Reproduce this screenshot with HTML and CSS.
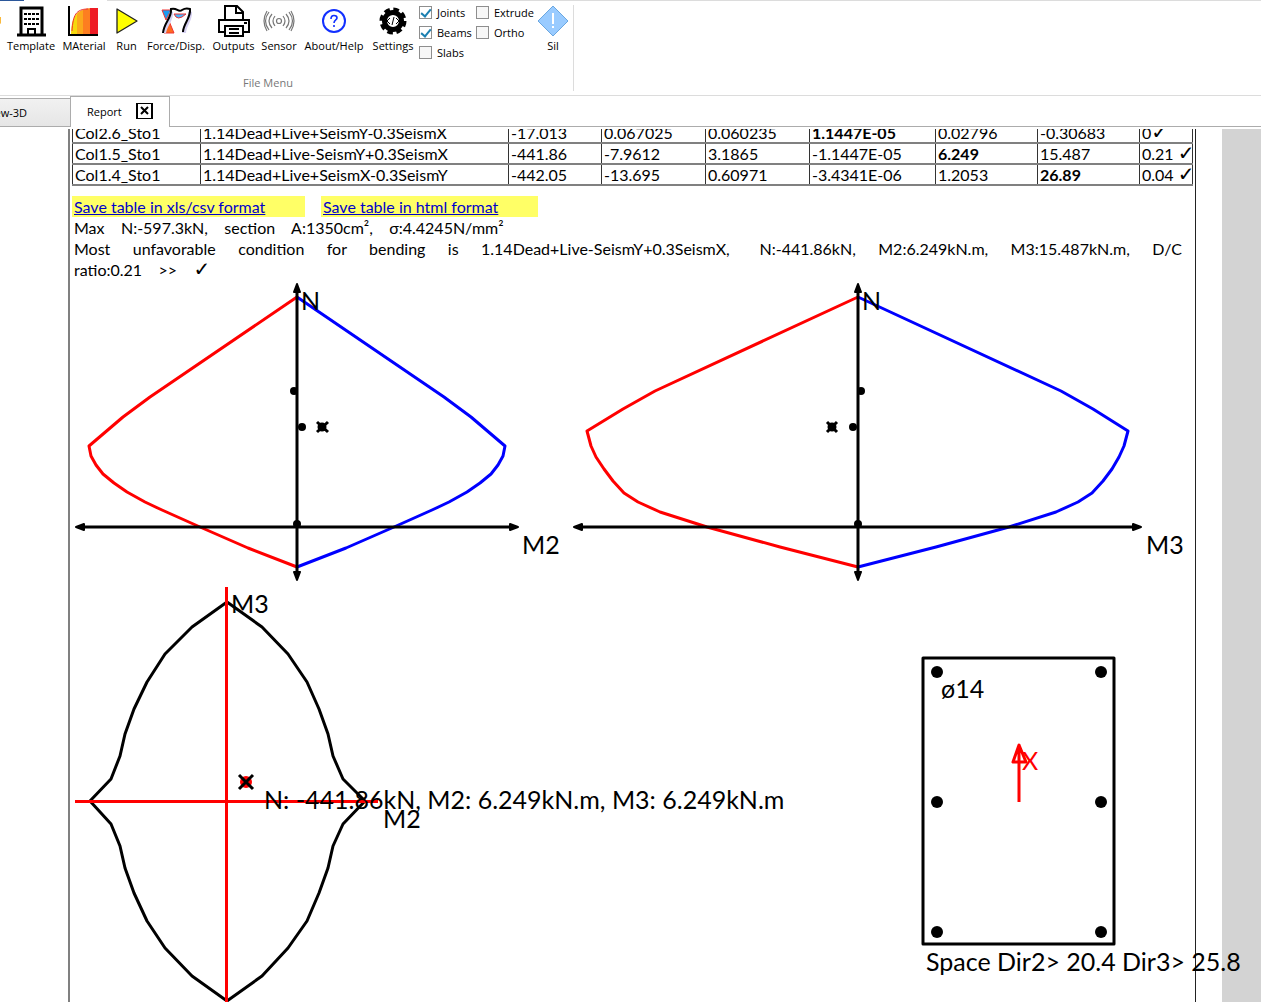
FILE: index.html
```html
<!DOCTYPE html>
<html lang="en">
<head>
    <meta charset="UTF-8">
    <meta name="viewport" content="width=device-width, initial-scale=1.0">
    <title>Report</title>
    <link rel="stylesheet" href="styles.css">
</head>
<body>

    <!-- Ribbon -->
    <header class="ribbon">
        <div class="ribbon-edge"><span class="edge-file"></span><span class="edge-active"></span><span class="edge-rest"></span></div>
        <section class="group">
            <div class="tools">
                <button class="tool" type="button" aria-label="Open">
                    <svg class="icon" width="32" height="32" viewBox="0 0 32 32"><path d="M0 12h32v6l-3 4H0z" fill="#f9b93c"/></svg>
                </button>
                <button class="tool" type="button">
                    <svg class="icon" width="32" height="32" viewBox="0 0 32 32">
                        <path d="M6 30V3h21v27M2 30h29" fill="none" stroke="#000" stroke-width="3"/>
                        <path d="M9 9h15M9 14h15M9 19h15" stroke="#000" stroke-width="2" stroke-dasharray="3 1"/>
                        <path d="M13 30v-6h7v6" fill="none" stroke="#000" stroke-width="2"/>
                    </svg>
                    Template
                </button>
                <button class="tool" type="button">
                    <svg class="icon" width="32" height="32" viewBox="0 0 32 32">
                        <path d="M3 29c0-12 3-19 8-22v22z" fill="#f6d80e"/>
                        <path d="M9 29V9q3-4 6-4v24z" fill="#fba81c"/>
                        <path d="M15 29V5q4-2 8-2v26z" fill="#fd7e20"/>
                        <path d="M22 29V3h8v26z" fill="#ee1c25"/>
                        <path d="M4 26C5 10 8 4 20 4" fill="none" stroke="#e33" stroke-width="1"/>
                        <path d="M1 1v29h29" fill="none" stroke="#000" stroke-width="2"/>
                    </svg>
                    MAterial
                </button>
                <button class="tool" type="button">
                    <svg class="icon" width="32" height="32" viewBox="0 0 32 32"><path d="M6 4v24l20-12z" fill="#ff0" stroke="#222" stroke-width="1.3" stroke-linejoin="round"/></svg>
                    Run
                </button>
                <button class="tool" type="button">
                    <svg class="icon" width="32" height="32" viewBox="0 0 32 32">
                        <path d="M2 5h9L6 15z" fill="#1b9bf0" stroke="#e33" stroke-width="1"/>
                        <path d="M9 16l5 12H4z" fill="#ff6a1f" stroke="#e33" stroke-width="1"/>
                        <path d="M14 9h12l-4 3q-4 2-6 0z" fill="#48b6ff" stroke="#e33" stroke-width="1"/>
                        <path d="M11 7c1 8-6 13-7 21M30 7c1 8-6 13-6 21" fill="none" stroke="#d5cff0" stroke-width="4"/>
                        <path d="M3 28C4 17 12 13 11 4c6-2 7 4 11 1 3-2 5-2 8-1 1 9-7 15-7 23" fill="none" stroke="#000" stroke-width="2"/>
                    </svg>
                    Force/Disp.
                </button>
                <button class="tool" type="button">
                    <svg class="icon" width="32" height="32" viewBox="0 0 32 32">
                        <path d="M7 14V1h12l6 6v7M18 2v6h7" fill="none" stroke="#000" stroke-width="2"/>
                        <path d="M7 27H1V15h30v12h-6" fill="none" stroke="#000" stroke-width="2"/>
                        <path d="M7 21h18v10H7zM11 24h10M11 28h10M26 18h3" fill="none" stroke="#000" stroke-width="2"/>
                    </svg>
                    Outputs
                </button>
                <button class="tool" type="button">
                    <svg class="icon" width="32" height="32" viewBox="0 0 32 32">
                        <g fill="none" stroke="#777" stroke-width="1.2">
                            <circle cx="16" cy="16" r="2.5"/>
                            <path d="M12 11q-4 5 0 10M20 11q4 5 0 10M9 9q-6 7 0 14M23 9q6 7 0 14M6 7q-7 9 0 18M26 7q7 9 0 18M4 6q-6 10 0 20M28 6q6 10 0 20"/>
                        </g>
                    </svg>
                    Sensor
                </button>
                <button class="tool" type="button">
                    <svg class="icon" width="32" height="32" viewBox="0 0 32 32">
                        <circle cx="16" cy="16" r="11" fill="#fff" stroke="#1230ff" stroke-width="2"/>
                        <path d="M13 14c0-5 6-4 6-1 0 2-3 2-3 5M16 20v2" fill="none" stroke="#1230ff" stroke-width="1.6"/>
                    </svg>
                    About/Help
                </button>
                <button class="tool" type="button">
                    <svg class="icon" width="32" height="32" viewBox="0 0 32 32">
                        <circle cx="16" cy="16" r="11.5" fill="none" stroke="#000" stroke-width="4" stroke-dasharray="5.500 3.532"/>
                        <circle cx="16" cy="16" r="8.5" fill="#fff" stroke="#000" stroke-width="5"/>
                        <path d="M13 13l-3 3 3 3M19 13l3 3-3 3M17 12l-2 8" fill="none" stroke="#000" stroke-width="1"/>
                    </svg>
                    Settings
                </button>
                <div class="checks">
                    <label class="check"><input type="checkbox" checked>Joints</label>
                    <label class="check"><input type="checkbox" checked>Beams</label>
                    <label class="check"><input type="checkbox">Slabs</label>
                </div>
                <div class="checks">
                    <label class="check"><input type="checkbox">Extrude</label>
                    <label class="check"><input type="checkbox">Ortho</label>
                </div>
                <button class="tool" type="button">
                    <svg class="icon" width="32" height="32" viewBox="0 0 32 32">
                        <path d="M16 1l15 15L16 31 1 16z" fill="#99cbff" stroke="#6aa7e0" stroke-width="1" stroke-linejoin="round"/>
                        <path d="M16 8v11M16 21v2" stroke="#fff" stroke-width="2"/>
                    </svg>
                    Sil
                </button>
            </div>
            <div class="group-name">File Menu</div>
        </section>
    </header>

    <!-- Document tabs -->
    <nav class="tabs">
        <button class="tab" type="button">View-3D</button>
        <div class="tab active">
            Report
            <button class="close" type="button" aria-label="Close">
                <svg width="16" height="16" viewBox="0 0 16 16"><path d="M4 4l7 7M11 4l-7 7" stroke="#000" stroke-width="2"/></svg>
            </button>
        </div>
    </nav>

    <!-- Report -->
    <main class="viewer">
        <article class="paper">
            <table class="results">
                <colgroup>
                    <col class="c-name"><col><col class="c-n"><col class="c-v"><col class="c-v"><col class="c-t"><col class="c-m"><col class="c-m"><col class="c-ratio">
                </colgroup>
                <tbody>
                    <tr><td>Col2.6_Sto1</td><td>1.14Dead+Live+SeismY-0.3SeismX</td><td>-17.013</td><td>0.067025</td><td>0.060235</td><td><b>1.1447E-05</b></td><td>0.02796</td><td>-0.30683</td><td>0<span class="ok">✓</span></td></tr>
                    <tr><td>Col1.5_Sto1</td><td>1.14Dead+Live-SeismY+0.3SeismX</td><td>-441.86</td><td>-7.9612</td><td>3.1865</td><td>-1.1447E-05</td><td><b>6.249</b></td><td>15.487</td><td>0.21 <span class="ok">✓</span></td></tr>
                    <tr><td>Col1.4_Sto1</td><td>1.14Dead+Live+SeismX-0.3SeismY</td><td>-442.05</td><td>-13.695</td><td>0.60971</td><td>-3.4341E-06</td><td>1.2053</td><td><b>26.89</b></td><td>0.04 <span class="ok">✓</span></td></tr>
                </tbody>
            </table>

            <div class="saves">
                <div class="save save-csv"><a href="#">Save table in xls/csv format</a></div>
                <div class="save save-html"><a href="#">Save table in html format</a></div>
            </div>

            <div class="notes">
                <p>Max &nbsp;&nbsp; N:-597.3kN, &nbsp;&nbsp; section &nbsp;&nbsp; A:1350cm², &nbsp;&nbsp; σ:4.4245N/mm²</p>
                <p class="spread">Most &nbsp; unfavorable &nbsp; condition &nbsp; for &nbsp; bending &nbsp; is &nbsp; 1.14Dead+Live-SeismY+0.3SeismX, &nbsp;&nbsp; N:-441.86kN, &nbsp; M2:6.249kN.m, &nbsp; M3:15.487kN.m, &nbsp; D/C</p>
                <p>ratio:0.21 &nbsp;&nbsp; &gt;&gt; &nbsp;&nbsp; <span class="ok">✓</span></p>
            </div>

            <div class="row">
                <!-- N - M2 -->
                <svg class="chart" width="490" height="304" viewBox="74 281 490 304">
                    <polyline class="red" points="297,297 150,397 123,417 89,446 91,456 96,465 103,474 114,483 127,492 145,502 162,510 200,527 248,548 297,567"/>
                    <polyline class="blue" points="297,297 444,397 471,417 505,446 503,456 498,465 491,474 480,483 467,492 449,502 432,510 394,527 346,548 297,567"/>
                    <path class="axis" d="M297 288V577M80 527H514"/>
                    <path d="M297 284l3 8h-6zM297 580l3-8h-6zM76 527l8-3v6zM518 527l-8-3v6z" stroke="#000" stroke-width="2" stroke-linejoin="round"/>
                    <circle cx="294" cy="391" r="4"/><circle cx="302" cy="427" r="4"/><circle cx="297" cy="524" r="4"/>
                    <circle cx="322" cy="427" r="4.500"/><path class="mark" d="M317 422l11 10M328 422l-11 10"/>
                    <text x="301" y="310">N</text>
                    <text x="522" y="554">M2</text>
                </svg>
                <!-- N - M3 -->
                <svg class="chart" width="621" height="304" viewBox="572 281 621 304">
                    <polyline class="red" points="858,297 655,391 623,409 587,431 591,446 596,457 604,469 613,481 624,493 638,502 660,512 707,527 780,547 858,567"/>
                    <polyline class="blue" points="858,297 1061,391 1093,409 1128,431 1124,446 1119,457 1112,469 1103,481 1092,493 1078,502 1056,512 1009,527 936,547 858,567"/>
                    <path class="axis" d="M858 288V577M578 527H1137"/>
                    <path d="M858 284l3 8h-6zM858 580l3-8h-6zM574 527l8-3v6zM1141 527l-8-3v6z" stroke="#000" stroke-width="2" stroke-linejoin="round"/>
                    <circle cx="861" cy="391" r="4"/><circle cx="853" cy="427" r="4"/><circle cx="858" cy="524" r="4"/>
                    <circle cx="832" cy="427" r="4.500"/><path class="mark" d="M827 422l10 10M837 422l-10 10"/>
                    <text x="862" y="310">N</text>
                    <text x="1146" y="554">M3</text>
                </svg>
            </div>

            <div class="row">
                <!-- M2 - M3 -->
                <svg class="chart" width="720" height="420" viewBox="74 585 720 420">
                    <polygon class="black" points="227,602 262,627 288,654 307,682 319,709 328,734 333,756 343,779 365,801 343,824 333,846 328,868 319,893 307,921 288,948 262,976 227,1001 192,976 165,948 147,921 134,893 125,868 120,846 111,824 90,801 111,779 120,756 125,734 134,709 147,682 165,654 192,627"/>
                    <path class="red" d="M226.500 587V1002M75 801.500H378"/>
                    <circle cx="246" cy="782" r="6" fill="red"/><path class="mark" d="M239 775l14 14M253 775l-14 14"/>
                    <text x="231" y="613">M3</text>
                    <text x="264" y="809">N: -441.86kN, M2: 6.249kN.m, M3: 6.249kN.m</text>
                    <text x="383" y="828">M2</text>
                </svg>
                <!-- Column section -->
                <svg class="chart" width="273" height="420" viewBox="920 585 273 420">
                    <rect class="black" x="923" y="658" width="191" height="286"/>
                    <g>
                        <circle cx="937" cy="672" r="6"/><circle cx="1101" cy="672" r="6"/>
                        <circle cx="937" cy="802" r="6"/><circle cx="1101" cy="802" r="6"/>
                        <circle cx="937" cy="932" r="6"/><circle cx="1101" cy="932" r="6"/>
                    </g>
                    <path class="red" d="M1019 802V745l-6 17h13l-7-17"/>
                    <text x="941" y="698">ø14</text>
                    <text x="1022" y="770" fill="red">X</text>
                    <text x="926" y="971">Space Dir2&gt; 20.4 Dir3&gt; 25.8</text>
                </svg>
            </div>
        </article>
        <div class="gutter"></div>
    </main>

</body>
</html>
```
FILE: styles.css
```css
* {
    margin: 0;
    padding: 0;
    box-sizing: border-box;
}
body {
    height: 100vh;
    display: flex;
    flex-direction: column;
    overflow: hidden;
    background: #fff;
    color: #000;
    font-family: "Open Sans", "Noto Sans", sans-serif;
    font-size: 11px;
}
button {
    font: inherit;
    color: inherit;
    background: none;
    border: none;
}

/* Ribbon */
.ribbon {
    flex: none;
    height: 96px;
    border-bottom: 1px solid #dcdcdc;
}
.ribbon-edge {
    display: flex;
    gap: 2px;
    height: 1px;
}
.edge-file {
    width: 24px;
    background: #2b579a;
}
.edge-active {
    width: 79px;
}
.edge-rest {
    flex: 1;
    background: #dcdcdc;
}
/* the first part of the group is scrolled out of view */
.group {
    width: 611px;
    margin: 4px 0 0 -37px;
    height: 86px;
    display: flex;
    flex-direction: column;
    justify-content: space-between;
    border-right: 1px solid #dcdcdc;
}
.tools {
    display: grid;
    grid-template-columns: 41px 54px 52px 33px 66px 49px 42px 68px 50px 58px 61px 32px;
}
.tool {
    display: flex;
    flex-direction: column;
    align-items: center;
    line-height: 18px;
    white-space: nowrap;
}
.tool:first-child {
    align-items: flex-start;
    padding-left: 6px;
}
.tool:hover {
    background: #e5f1fb;
}
.icon {
    display: block;
}
.checks {
    display: flex;
    flex-direction: column;
    margin-top: -3px;
}
.checks:nth-child(10) {
    padding-left: 1px;
}
.check {
    display: flex;
    align-items: center;
    gap: 5px;
    height: 20px;
}
.check input {
    appearance: none;
    width: 13px;
    height: 13px;
    border: 1px solid #8e8e8e;
    background: #f7f7f7;
}
.check input:checked {
    background: #fff;
}
.check input:checked::after {
    content: "";
    display: block;
    width: 4px;
    height: 8px;
    margin: 0 auto;
    border: solid #1a7fb0;
    border-width: 0 2px 2px 0;
    transform: rotate(40deg);
}
.group-name {
    text-align: center;
    line-height: 16px;
    color: #777;
}

/* Tabs */
.tabs {
    flex: none;
    display: flex;
    align-items: flex-end;
    height: 31px;
    border-bottom: 1px solid #acacac;
}
.tab {
    width: 71px;
    height: 28px;
    padding-right: 44px;
    display: flex;
    align-items: center;
    justify-content: flex-end;
    white-space: nowrap;
    border-top: 1px solid #acacac;
    background: linear-gradient(#f1f1f1, #e6e6e6);
}
.tab.active {
    width: 100px;
    height: 31px;
    margin: 0 0 -1px -1px;
    padding: 0 16px 2px;
    justify-content: space-between;
    border: 1px solid #acacac;
    border-bottom: none;
    background: #fff;
}
.close {
    width: 17px;
    height: 16px;
    border: 1px solid #000;
    border-left-width: 2px;
    border-right-width: 2px;
}
.close svg {
    display: block;
    margin: -1px;
}

/* Report */
.viewer {
    flex: 1;
    min-height: 0;
    display: flex;
    margin-top: 2px;
    overflow: hidden;
    font-family: Lato, "Open Sans", sans-serif;
    font-size: 16px;
    line-height: 21px;
}
.paper {
    position: relative;
    z-index: 1;
    flex: 1;
    height: max-content;
    margin: 0 26px 0 68px;
    padding: 0 2px;
    border-left: 2px solid #808080;
    border-right: 1px solid #222;
}
.gutter {
    width: 39px;
    background: #d3d3d3;
}
.results {
    width: 100%;
    margin-top: -8px;
    table-layout: fixed;
    border-collapse: collapse;
}
.results td {
    height: 21px;
    padding-left: 2px;
    line-height: 19px;
    white-space: nowrap;
    border: 1px solid #333;
    border-width: 2px 1px;
    border-color: #808080 #333;
}
.c-name {
    width: 128px;
}
.c-n {
    width: 93px;
}
.c-v {
    width: 104px;
}
.c-t {
    width: 126px;
}
.c-m {
    width: 102px;
}
.c-ratio {
    width: 53px;
}
.ok {
    font-family: "DejaVu Sans", sans-serif;
    font-size: 20px;
    font-weight: bold;
    line-height: 0;
}
.saves {
    display: flex;
    gap: 16px;
    margin-top: 10px;
}
.save {
    padding-left: 2px;
    background: #ffff66;
}
.save-csv {
    width: 233px;
}
.save-html {
    width: 217px;
}
.save a {
    color: #00c;
}
.notes {
    padding: 0 11px 1px 2px;
}
.spread {
    text-align-last: justify;
}

/* Diagrams */
.row {
    display: flex;
    justify-content: space-between;
    padding-left: 2px;
}
.chart {
    display: block;
    overflow: visible;
    font-size: 25px;
}
.red,
.blue,
.black,
.axis,
.mark {
    fill: none;
    stroke: #000;
    stroke-width: 3;
    stroke-linejoin: round;
}
.red {
    stroke: #f00;
}
.blue {
    stroke: #00f;
}
```
